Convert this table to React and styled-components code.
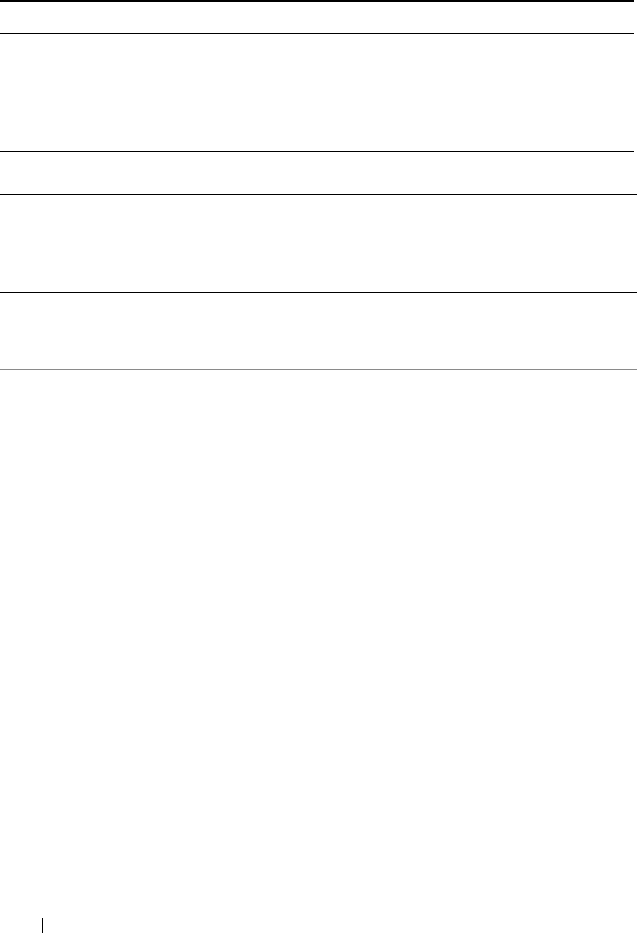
import React from 'react';
import styled, { createGlobalStyle } from 'styled-components';

const GlobalStyle = createGlobalStyle`
  html, body {
    margin: 0;
    padding: 0;
    background: #ffffff;
    font-family: "Liberation Sans", Arial, sans-serif;
  }
`;

const Page = styled.div`
  width: 641px;
  height: 933px;
  display: flex;
  flex-direction: column;
  justify-content: space-between;
  overflow: hidden;
`;

const Table = styled.div`
  display: flex;
  flex-direction: column;
`;

const Row = styled.div`
  width: ${(p) => p.width}px;
  height: ${(p) => p.height}px;
  border-top: ${(p) => p.top || 1}px solid #000;
  box-sizing: border-box;
`;

const EndRule = styled.div`
  width: 637px;
  height: 1px;
  background: #8a8a8a;
`;

const Footer = styled.div`
  height: 15px;
  padding-left: 42px;
  display: flex;
`;

const FooterBar = styled.div`
  width: 1px;
  height: 15px;
  background: #000;
`;

const rows = [
  { width: 634, height: 33, top: 2 },
  { width: 634, height: 118 },
  { width: 634, height: 43 },
  { width: 637, height: 98 },
  { width: 637, height: 77 },
];

const App = () => (
  <>
    <GlobalStyle />
    <Page>
      <Table>
        {rows.map((r, i) => (
          <Row key={i} width={r.width} height={r.height} top={r.top} />
        ))}
        <EndRule />
      </Table>
      <Footer>
        <FooterBar />
      </Footer>
    </Page>
  </>
);

export default App;
